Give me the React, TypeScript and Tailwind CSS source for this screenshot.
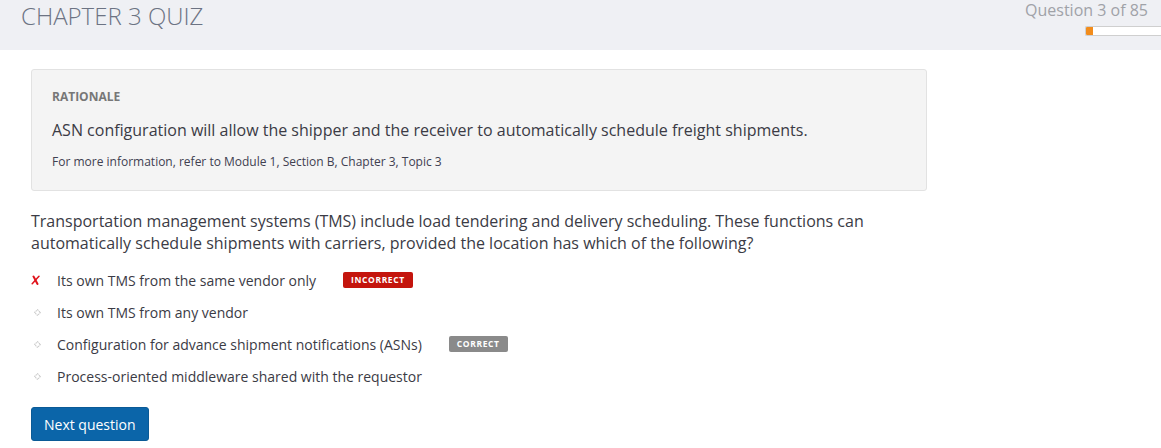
import React from 'react';

type Option = {
  text: string;
  badge?: 'incorrect' | 'correct';
  picked?: boolean;
};

const options: Option[] = [
  { text: 'Its own TMS from the same vendor only', badge: 'incorrect', picked: true },
  { text: 'Its own TMS from any vendor' },
  { text: 'Configuration for advance shipment notifications (ASNs)', badge: 'correct' },
  { text: 'Process-oriented middleware shared with the requestor' },
];

function Bullet() {
  return (
    <svg width="7" height="7" viewBox="0 0 7 7" className="ml-[3px]">
      <path d="M3.5 0.6 L6.4 3.5 L3.5 6.4 L0.6 3.5 Z" fill="none" stroke="#cccccc" strokeWidth="1.1" strokeDasharray="1.4 0.6" />
    </svg>
  );
}

function Cross() {
  return (
    <svg width="9" height="10" viewBox="0 0 9 10">
      <path d="M2.5 1.5 C3.8 3.5 4.8 6 6.5 9" stroke="#e0141c" strokeWidth="2" strokeLinecap="round" fill="none" />
      <path d="M8 1.2 C5.8 3.5 3.8 6 1.2 8.8" stroke="#e0141c" strokeWidth="1.5" strokeLinecap="round" fill="none" />
    </svg>
  );
}

export default function App() {
  return (
    <div className="min-h-screen bg-white text-[#3b3b45] font-['Open_Sans',sans-serif]">
      <div className="h-[50px] bg-[#eff0f4] flex justify-between">
        <h1 className="pl-[21px] text-[24px] leading-[32px] font-light text-[#6c7383]">
          CHAPTER 3 QUIZ
        </h1>
        <div className="flex flex-col items-end">
          <div className="pr-[13px] text-[16px] leading-[20px] text-[#a0a2a8]">Question 3 of 85</div>
          <div className="mt-[6px] w-[76px] h-[10px] bg-white border border-[#cfcfcf] border-r-0 rounded-l-[2px] flex">
            <div className="w-[7px] h-full bg-[#f28c1b] rounded-l-[1px]" />
          </div>
        </div>
      </div>

      <div className="px-[31px]">
        <div className="mt-[19px] w-[896px] h-[122px] bg-[#f4f4f4] border border-[#e2e2e2] rounded-[3px] px-[20px] pt-[19px]">
          <div className="text-[12px] leading-[16px] font-bold text-[#777777]">RATIONALE</div>
          <p className="mt-[14px] text-[16px] leading-[22px]">
            ASN configuration will allow the shipper and the receiver to automatically schedule freight shipments.
          </p>
          <p className="mt-[13px] text-[12px] leading-[16px] text-[#404050]">
            For more information, refer to Module 1, Section B, Chapter 3, Topic 3
          </p>
        </div>

        <p className="mt-[19px] w-[896px] text-[16px] leading-[22px]">
          Transportation management systems (TMS) include load tendering and delivery scheduling. These functions can
          automatically schedule shipments with carriers, provided the location has which of the following?
        </p>

        <ul className="mt-[10px]">
          {options.map((o) => (
            <li key={o.text} className="h-[32px] flex items-center text-[14px]">
              <span className="w-[26px] flex items-center">{o.picked ? <Cross /> : <Bullet />}</span>
              <span>{o.text}</span>
              {o.badge === 'incorrect' && (
                <span className="ml-[27px] h-[16px] px-[8px] rounded-[2px] bg-[#c4150d] text-white text-[8.5px] font-bold tracking-[0.6px] flex items-center">
                  INCORRECT
                </span>
              )}
              {o.badge === 'correct' && (
                <span className="ml-[27px] h-[16px] px-[8px] rounded-[2px] bg-[#8a8a8a] text-white text-[8.5px] font-bold tracking-[0.6px] flex items-center">
                  CORRECT
                </span>
              )}
            </li>
          ))}
        </ul>

        <button className="mt-[15px] h-[34px] px-[12px] rounded-[3px] bg-[#0b65a9] border border-[#0a5a96] text-white text-[14px] font-medium">
          Next question
        </button>
      </div>
    </div>
  );
}
